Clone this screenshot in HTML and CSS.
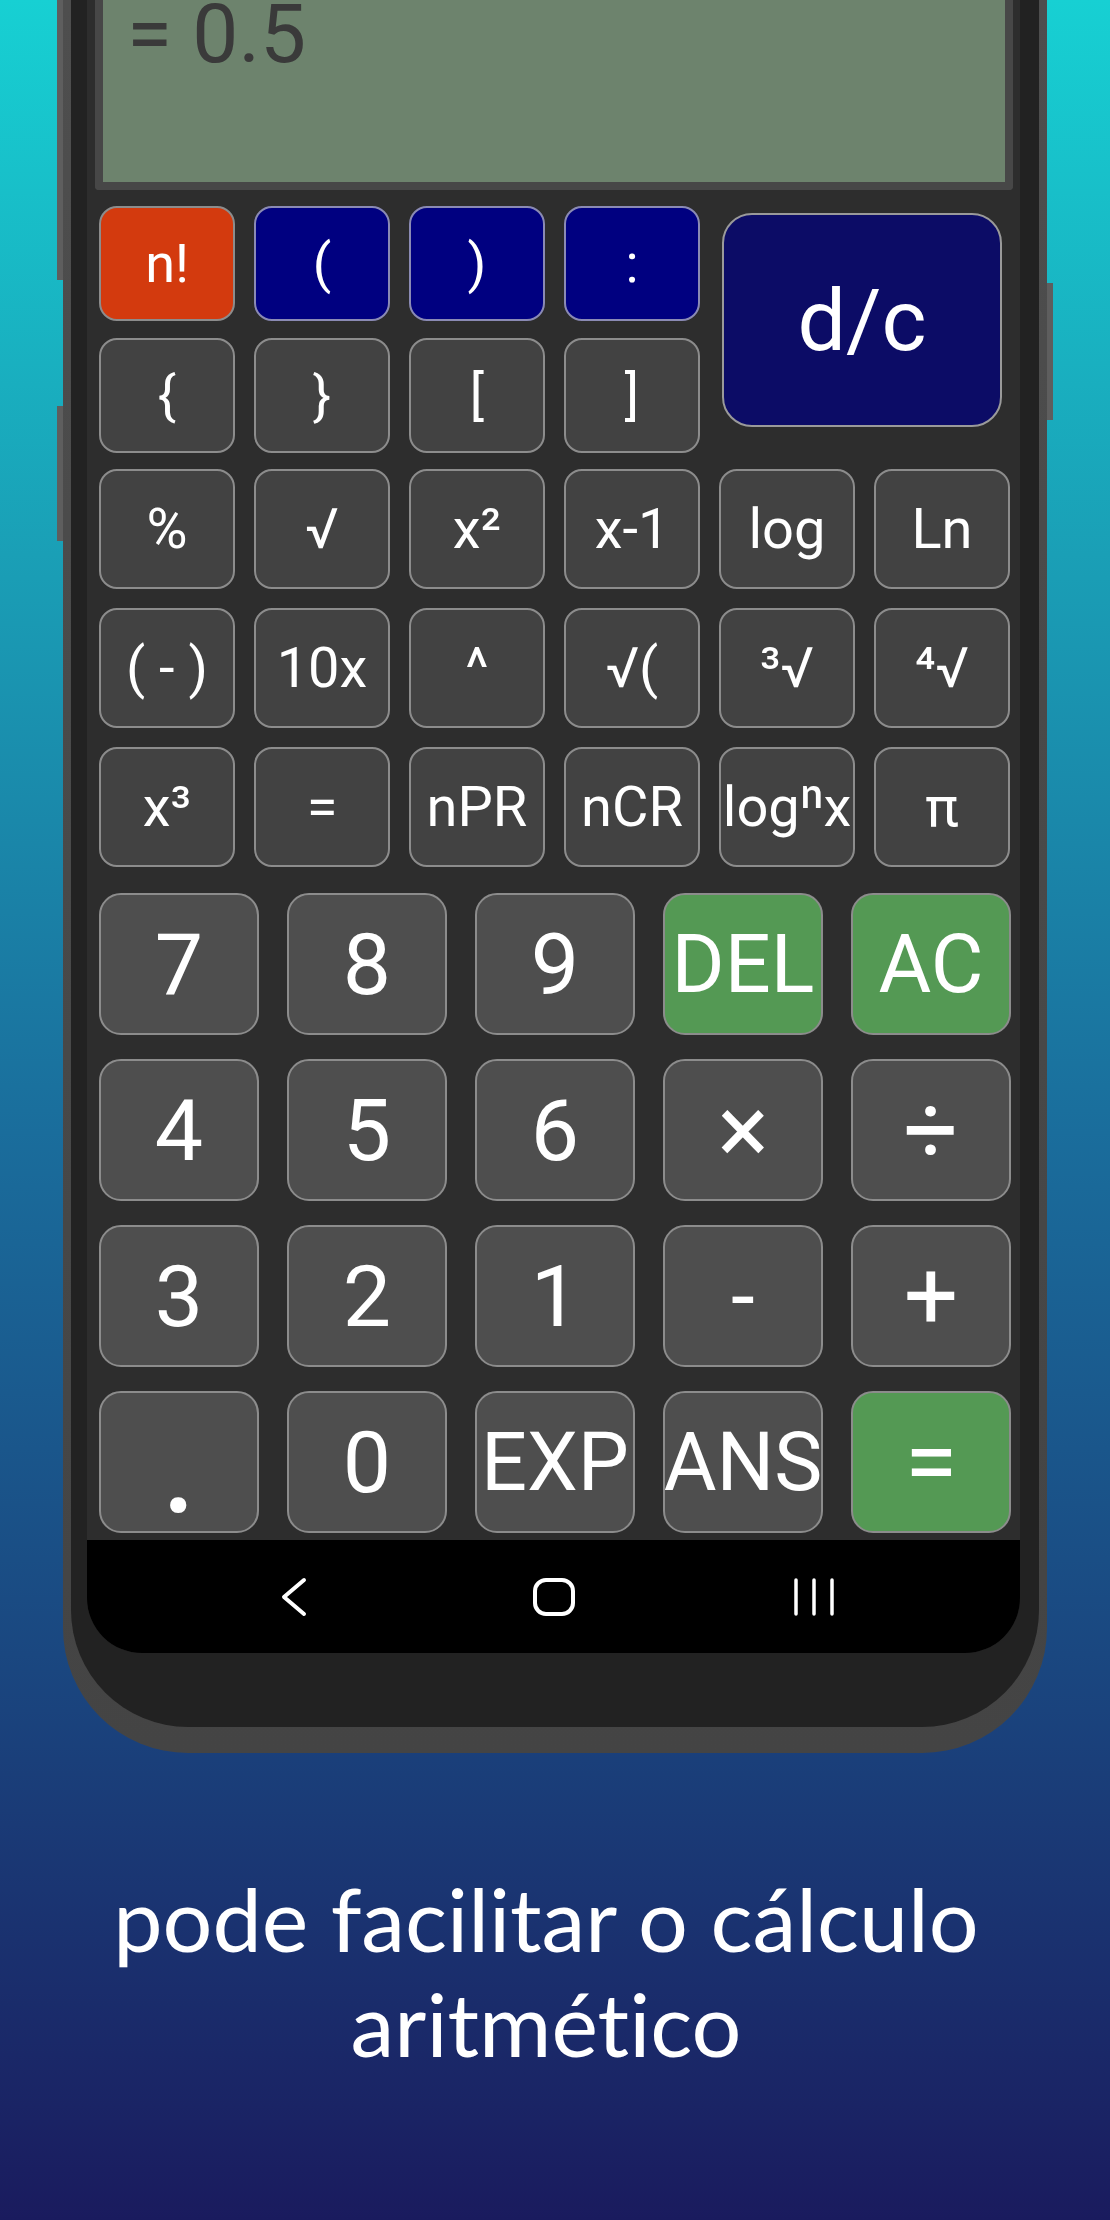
FILE: index.html
```html
<!DOCTYPE html>
<html lang="pt">
<head>
  <meta charset="UTF-8">
  <title>Calculadora</title>
  <link rel="stylesheet" href="styles.css">
</head>
<body>

  <div class="phone">
    <span class="side-btn left-1"></span>
    <span class="side-btn left-2"></span>
    <span class="side-btn right-1"></span>

    <div class="bezel">
      <div class="screen">

        <div class="display">
          <div class="result">= 0.5</div>
        </div>

        <!-- linha de parenteses + d/c -->
        <div class="top-keys">
          <button class="key small orange">n!</button>
          <button class="key small blue">(</button>
          <button class="key small blue">)</button>
          <button class="key small blue">:</button>
          <button class="key dc">d/c</button>
          <button class="key small">{</button>
          <button class="key small">}</button>
          <button class="key small">[</button>
          <button class="key small">]</button>
        </div>

        <div class="fn-keys">
          <button class="key fn">%</button>
          <button class="key fn">√</button>
          <button class="key fn">x²</button>
          <button class="key fn">x-1</button>
          <button class="key fn">log</button>
          <button class="key fn">Ln</button>

          <button class="key fn">( - )</button>
          <button class="key fn">10x</button>
          <button class="key fn">^</button>
          <button class="key fn">√(</button>
          <button class="key fn">³√</button>
          <button class="key fn">⁴√</button>

          <button class="key fn">x³</button>
          <button class="key fn">=</button>
          <button class="key fn">nPR</button>
          <button class="key fn">nCR</button>
          <button class="key fn">logⁿx</button>
          <button class="key fn">π</button>
        </div>

        <div class="num-keys">
          <button class="key num">7</button>
          <button class="key num">8</button>
          <button class="key num">9</button>
          <button class="key num word green">DEL</button>
          <button class="key num word green">AC</button>

          <button class="key num">4</button>
          <button class="key num">5</button>
          <button class="key num">6</button>
          <button class="key num op">×</button>
          <button class="key num op">÷</button>

          <button class="key num">3</button>
          <button class="key num">2</button>
          <button class="key num">1</button>
          <button class="key num">-</button>
          <button class="key num op">+</button>

          <button class="key num dot">.</button>
          <button class="key num">0</button>
          <button class="key num word">EXP</button>
          <button class="key num word">ANS</button>
          <button class="key num op green">=</button>
        </div>

        <div class="navbar">
          <svg width="48" height="48" viewBox="0 0 48 48">
            <polyline points="34,7 14,24 34,41" fill="none" stroke="#fff" stroke-width="4" stroke-linecap="round" stroke-linejoin="round"/>
          </svg>
          <svg width="48" height="48" viewBox="0 0 48 48">
            <rect x="5" y="7" width="38" height="34" rx="11" fill="none" stroke="#fff" stroke-width="4"/>
          </svg>
          <svg width="48" height="48" viewBox="0 0 48 48">
            <g stroke="#fff" stroke-width="3.5" stroke-linecap="round">
              <line x1="6" y1="7" x2="6" y2="41"/>
              <line x1="24" y1="7" x2="24" y2="41"/>
              <line x1="42" y1="7" x2="42" y2="41"/>
            </g>
          </svg>
        </div>

      </div>
    </div>
  </div>

  <p class="caption">pode facilitar o cálculo<br>aritmético</p>

</body>
</html>
```

FILE: styles.css
```css
* {
  box-sizing: border-box;
}
body {
  margin: 0;
  width: 1110px;
  height: 2220px;
  overflow: hidden;
  background: linear-gradient(180deg, #17d0d3 0%, #1a9fb6 25%, #1a6d9c 51%, #1a437d 77%, #1a1b5e 100%);
  font-family: Roboto, "Liberation Sans", sans-serif;
}

/* aparelho */
.phone {
  position: relative;
  width: 984px;
  margin-left: 63px;
  padding: 0 8px 26px;
  background: linear-gradient(180deg, #4e4e4e, #444);
  border-radius: 0 0 125px 125px;
}
.side-btn {
  position: absolute;
  width: 6px;
  background: #5e5e5e;
}
.side-btn.left-1 {
  left: -6px;
  top: 0;
  height: 280px;
}
.side-btn.left-2 {
  left: -6px;
  top: 406px;
  height: 135px;
}
.side-btn.right-1 {
  right: -6px;
  top: 283px;
  height: 137px;
}
.bezel {
  background: #222;
  padding: 0 19px 74px 16px;
  border-radius: 0 0 117px 117px;
}
.screen {
  background: #2d2d2d;
  border-radius: 0 0 55px 55px;
  overflow: hidden;
}

/* visor */
.display {
  height: 190px;
  margin: 0 7px 0 8px;
  padding-left: 24px;
  background: #6d836d;
  border: 8px solid #474747;
  border-top: none;
  border-radius: 0 0 4px 4px;
}
.result {
  font-size: 82px;
  line-height: 68px;
  color: #3a3a3a;
}

/* teclas */
.key {
  display: flex;
  align-items: center;
  justify-content: center;
  padding: 0;
  margin: 0;
  font-family: inherit;
  color: #fff;
  background: #424242;
  border: 2px solid #8c8c8c;
  border-radius: 18px;
  white-space: nowrap;
  cursor: pointer;
}
.top-keys {
  display: grid;
  grid-template-columns: repeat(6, 136px);
  grid-template-rows: 115px 115px;
  column-gap: 19px;
  row-gap: 17px;
  margin: 16px 0 0 12px;
}
.key.small {
  font-size: 54px;
}
.key.orange {
  background: #d33a0e;
}
.key.blue {
  background: #000080;
  border-color: #8a8ab4;
}
.key.dc {
  grid-column: 5 / 7;
  grid-row: 1 / 3;
  margin: 7px 8px 26px 3px;
  font-size: 86px;
  background: #0c0c66;
  border-color: #9a9a9a;
  border-radius: 30px;
}
.fn-keys {
  display: grid;
  grid-template-columns: repeat(6, 136px);
  grid-template-rows: repeat(3, 120px);
  column-gap: 19px;
  row-gap: 19px;
  margin: 16px 0 0 12px;
}
.key.fn {
  font-size: 56px;
}
.num-keys {
  display: grid;
  grid-template-columns: repeat(5, 160px);
  grid-template-rows: repeat(4, 142px);
  column-gap: 28px;
  row-gap: 24px;
  margin: 26px 0 0 12px;
}
.key.num {
  font-size: 86px;
  background: #4e4e4e;
  border-radius: 22px;
}
.key.num.word {
  font-size: 81px;
}
.key.num.op {
  font-size: 96px;
}
.key.num.dot {
  font-size: 144px;
}
.key.green {
  background: #549954;
}

/* barra de navegacao */
.navbar {
  display: flex;
  align-items: center;
  justify-content: center;
  gap: 212px;
  height: 113px;
  margin-top: 7px;
  background: #000;
}

.caption {
  margin: 113px 0 0;
  padding-right: 18px;
  font-family: Lato, "Open Sans", sans-serif;
  font-size: 88px;
  font-variant-ligatures: none;
  line-height: 105px;
  text-align: center;
  color: #fff;
}
```
